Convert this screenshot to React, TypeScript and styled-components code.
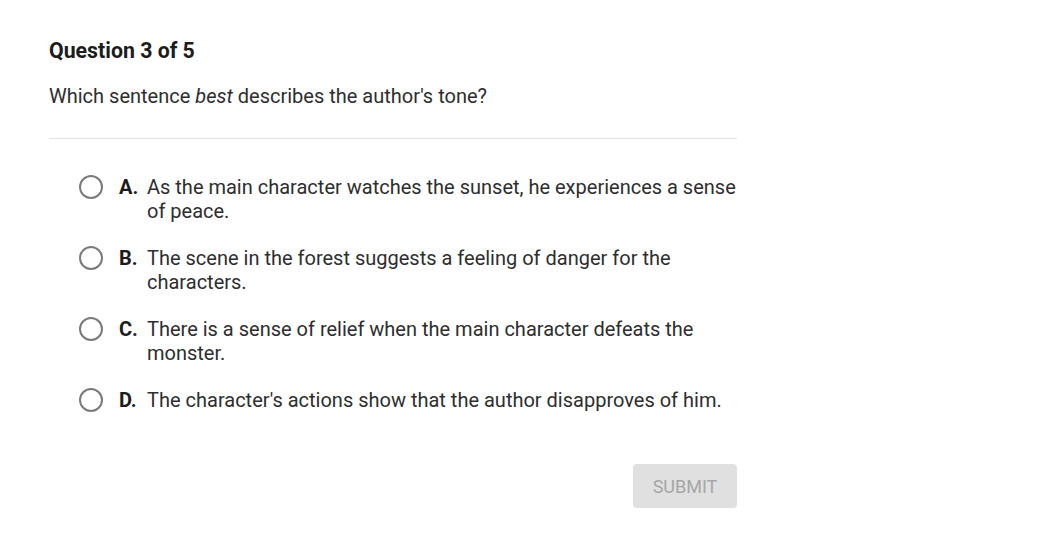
import React from "react";
import styled, { createGlobalStyle } from "styled-components";

const Global = createGlobalStyle`
  html, body { margin: 0; padding: 0; background: #ffffff; }
  body { font-family: Roboto, "Liberation Sans", Arial, sans-serif; }
`;

const Page = styled.div`
  width: 688px;
  padding: 38px 0 0 49px;
  display: flex;
  flex-direction: column;
`;

const Title = styled.h2`
  margin: 0;
  font-size: 21.3px;
  line-height: 26px;
  font-weight: 700;
  color: #1c1c1c;
`;

const Prompt = styled.p`
  margin: 20px 0 0;
  font-size: 20px;
  line-height: 24px;
  color: #2e2e2e;
  em { font-style: italic; }
`;

const Divider = styled.hr`
  margin: 30px 0 0;
  border: 0;
  border-top: 1px solid #e3e3e3;
  height: 0;
`;

const Options = styled.div`
  margin-top: 36px;
  padding-left: 30px;
  display: flex;
  flex-direction: column;
  gap: 23px;
`;

const Option = styled.label`
  display: flex;
  align-items: flex-start;
  cursor: pointer;
`;

const Radio = styled.span`
  flex: none;
  box-sizing: border-box;
  width: 24px;
  height: 24px;
  border: 2px solid #7a7a7a;
  border-radius: 50%;
  margin-right: 16px;
`;

const Letter = styled.span`
  flex: none;
  width: 28px;
  font-size: 20px;
  line-height: 24px;
  font-weight: 700;
  color: #1c1c1c;
`;

const OptionText = styled.span`
  font-size: 20px;
  line-height: 24px;
  color: #2e2e2e;
`;

const Footer = styled.div`
  margin-top: 52px;
  display: flex;
  justify-content: flex-end;
`;

const SubmitButton = styled.button`
  width: 104px;
  height: 44px;
  border: 0;
  border-radius: 4px;
  background: #e0e0e0;
  color: #a6a6a6;
  font-family: Roboto, "Liberation Sans", Arial, sans-serif;
  font-size: 18px;
  font-weight: 400;
  cursor: default;
`;

const options = [
  { letter: "A.", text: "As the main character watches the sunset, he experiences a sense of peace." },
  { letter: "B.", text: "The scene in the forest suggests a feeling of danger for the characters." },
  { letter: "C.", text: "There is a sense of relief when the main character defeats the monster." },
  { letter: "D.", text: "The character's actions show that the author disapproves of him." },
];

export default function App() {
  return (
    <>
      <Global />
      <Page>
        <Title>Question 3 of 5</Title>
        <Prompt>
          Which sentence <em>best</em> describes the author's tone?
        </Prompt>
        <Divider />
        <Options>
          {options.map((o) => (
            <Option key={o.letter}>
              <Radio />
              <Letter>{o.letter}</Letter>
              <OptionText>{o.text}</OptionText>
            </Option>
          ))}
        </Options>
        <Footer>
          <SubmitButton disabled>SUBMIT</SubmitButton>
        </Footer>
      </Page>
    </>
  );
}
